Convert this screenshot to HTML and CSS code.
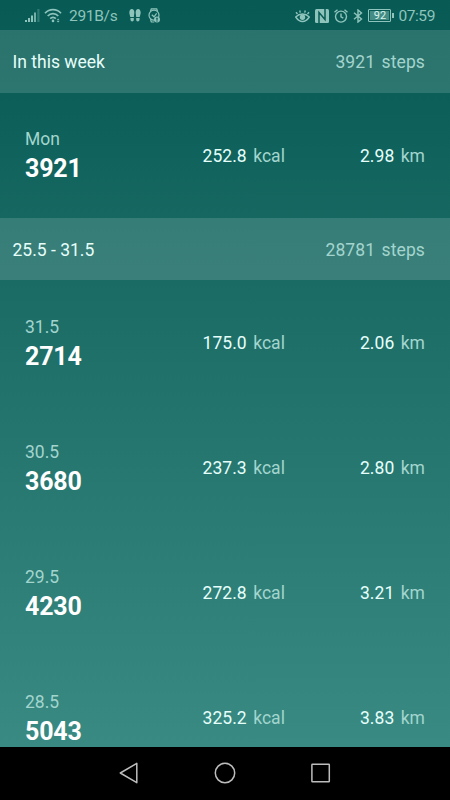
FILE: index.html
```html
<!DOCTYPE html>
<html lang="en">
<head>
    <meta charset="UTF-8">
    <meta name="viewport" content="width=device-width, initial-scale=1.0">
    <title>Steps history</title>
    <link rel="stylesheet" href="styles.css">
</head>
<body>
    <div class="status-bar">
        <svg class="signal" width="15" height="14" viewBox="0 0 15 14" fill="currentColor">
            <path d="M0 11h2v2H0zM3 9h2v4H3zM6 6.5h2V13H6z"/>
            <path opacity=".8" d="M9 3.5h2V13H9z"/>
            <path opacity=".3" d="M12.3 0h2.2v13h-2.2z"/>
        </svg>
        <svg class="wifi" width="18" height="15" viewBox="0 0 18 15" fill="none" stroke="currentColor" stroke-width="1.7">
            <path d="M1 5.2C5.4.4 12.6.4 17 5.2M3.7 8c2.9-3.1 7.7-3.1 10.6 0M6.2 10.7c1.6-1.7 4-1.7 5.6 0"/>
            <circle cx="9" cy="12.9" r="1.3" fill="currentColor" stroke="none"/>
            <path d="M12.7 12.2l1.4-1.7 1.4 1.7zM12.7 13l1.4 1.6 1.4-1.6z" fill="currentColor" stroke="none"/>
        </svg>
        <span class="speed">291B/s</span>
        <svg class="feet" width="12" height="13" viewBox="0 0 12 13" fill="currentColor">
            <path d="M2.8 0C4.6 0 5.5 1.7 5.3 4L4.8 8H1.3L.5 5C-.1 2.5 1 0 2.8 0zM1.4 9h3.4v1.8c0 2.2-3.2 2.2-3.3 0zM9.2 0C7.4 0 6.5 1.7 6.7 4l.5 4h3.5l.8-3c.6-2.5-.5-5-2.3-5zM10.6 9H7.2v1.8c0 2.2 3.2 2.2 3.3 0z"/>
        </svg>
        <svg class="watch" width="12" height="15" viewBox="0 0 12 15" fill="none" stroke="currentColor" stroke-width="1.2">
            <path d="M2.5 3.3L3.3.8h5.4l.8 2.5M2.5 11.3l.8 2.7h3"/>
            <circle cx="6" cy="7.2" r="5"/>
            <path d="M3.8 6.7L6 8.8l2.6-3.4"/>
            <circle cx="9" cy="11.5" r="3" fill="currentColor" stroke="none"/>
            <path class="cutout" d="M9 9.7v2M9 12.4v1"/>
        </svg>

        <svg class="eye" width="15" height="14" viewBox="0 0 15 14" fill="none" stroke="currentColor" stroke-width="1.4">
            <path d="M.7 8c4-4 9.6-4 13.6 0-4 6-9.6 6-13.6 0zM2.5 5L1 3.3M5.3 3.6L4.7 1.5M9.7 3.6l.6-2.1M12.5 5L14 3.3"/>
            <circle cx="7.5" cy="8.3" r="2.7" fill="currentColor" stroke="none"/>
            <circle class="cutout-fill" cx="8" cy="7.6" r=".7"/>
        </svg>
        <svg class="nfc" width="14" height="14" viewBox="0 0 14 14">
            <path fill="currentColor" d="M1.5 0H12.5Q14 0 14 1.5V12.5Q14 14 12.5 14H1.5Q0 14 0 12.5V1.5Q0 0 1.5 0z"/>
            <path class="cutout" d="M4 14V3.6l6 6.8V0"/>
        </svg>
        <svg class="alarm" width="14" height="14" viewBox="0 0 14 14" fill="none" stroke="currentColor" stroke-width="1.4">
            <circle cx="7" cy="7.6" r="5.5"/>
            <path d="M7 4.6v3.3l2.3 1.3M.5 3.3L3.5.8M13.5 3.3L10.5.8"/>
        </svg>
        <svg class="bluetooth" width="10" height="14" viewBox="0 0 10 14" fill="none" stroke="currentColor" stroke-width="1.4">
            <path d="M1 3.8l7.5 6.2L5 13V1l3.5 3L1 10.2"/>
        </svg>
        <div class="battery"><span>92</span></div>
        <span class="clock">07:59</span>
    </div>

    <div class="history">
        <div class="week-header">
            <span class="week">In this week</span>
            <span class="total">3921 <span class="unit">steps</span></span>
        </div>
        <div class="day">
            <div class="steps"><span class="date">Mon</span><b>3921</b></div>
            <div class="value">252.8 <span class="unit">kcal</span></div>
            <div class="value">2.98 <span class="unit">km</span></div>
        </div>

        <div class="week-header">
            <span class="week">25.5 - 31.5</span>
            <span class="total">28781 <span class="unit">steps</span></span>
        </div>
        <div class="day">
            <div class="steps"><span class="date">31.5</span><b>2714</b></div>
            <div class="value">175.0 <span class="unit">kcal</span></div>
            <div class="value">2.06 <span class="unit">km</span></div>
        </div>
        <div class="day">
            <div class="steps"><span class="date">30.5</span><b>3680</b></div>
            <div class="value">237.3 <span class="unit">kcal</span></div>
            <div class="value">2.80 <span class="unit">km</span></div>
        </div>
        <div class="day">
            <div class="steps"><span class="date">29.5</span><b>4230</b></div>
            <div class="value">272.8 <span class="unit">kcal</span></div>
            <div class="value">3.21 <span class="unit">km</span></div>
        </div>
        <div class="day">
            <div class="steps"><span class="date">28.5</span><b>5043</b></div>
            <div class="value">325.2 <span class="unit">kcal</span></div>
            <div class="value">3.83 <span class="unit">km</span></div>
        </div>
    </div>

    <div class="nav-bar">
        <svg width="22" height="22" viewBox="0 0 22 22"><path d="M18.8 1.3v19.4L2.3 11z"/></svg>
        <svg width="22" height="22" viewBox="0 0 22 22"><circle cx="11" cy="11" r="9.7"/></svg>
        <svg width="22" height="22" viewBox="0 0 22 22"><rect x="1.9" y="2.3" width="17.4" height="17.4" rx=".5"/></svg>
    </div>
</body>
</html>
```
FILE: styles.css
```css
* {
    box-sizing: border-box;
}
body {
    margin: 0;
    height: 800px;
    display: flex;
    flex-direction: column;
    overflow: hidden;
    font-family: Roboto, sans-serif;
    font-size: 17.5px;
    color: #e6fffb;
    background: linear-gradient(#075b54 0, #0b5f58 93px, #1b6b65 280px, #388a82 746px);
}
svg {
    display: block;
    flex: none;
}

/* status bar */
.status-bar {
    height: 30px;
    flex: none;
    display: flex;
    align-items: center;
    padding: 1px 15px 0 25px;
    color: #8fc4bc;
}
.wifi {
    margin-left: 4px;
}
.speed {
    margin-left: 7px;
    width: 49px;
    font-size: 15.5px;
    letter-spacing: -0.3px;
}
.feet {
    margin-left: 11px;
}
.watch {
    margin-left: 7px;
}
.eye {
    margin-left: auto;
}
.nfc {
    margin-left: 5px;
}
.alarm {
    margin-left: 5px;
}
.bluetooth {
    margin-left: 5px;
}
.cutout {
    fill: none;
    stroke: #075b54;
    stroke-width: 1.5;
}
.cutout-fill {
    fill: #075b54;
}
.battery {
    position: relative;
    width: 23px;
    height: 13px;
    margin-left: 5px;
    border: 1px solid #8fc4bc;
    border-radius: 1px;
    background: #458c84;
    box-shadow: inset 0 0 0 1px #075b54;
    color: #d5f5ef;
    font-size: 11px;
    line-height: 11px;
    text-align: center;
}
.battery::after {
    content: "";
    position: absolute;
    top: 3px;
    right: -4px;
    width: 2px;
    height: 5px;
    background: #8fc4bc;
}
.clock {
    margin-left: 7px;
    font-size: 15.5px;
    line-height: 18px;
    letter-spacing: -0.4px;
    text-align: right;
}

/* history list */
.history {
    flex: 1;
    min-height: 0;
    overflow: hidden;
}
.week-header {
    height: 62.5px;
    display: flex;
    justify-content: space-between;
    align-items: center;
    padding: 1.5px 25px 0 12.5px;
    background: rgba(255, 255, 255, 0.14);
}
.total {
    letter-spacing: 0.1px;
}
.total,
.unit,
.date {
    color: #a3d5ce;
}
.unit {
    margin-left: 2px;
}
.day {
    height: 125px;
    display: grid;
    grid-template-columns: 120px 140px 140px;
    align-items: center;
    padding: 1px 25px 0;
}
.steps {
    display: flex;
    flex-direction: column;
    padding-top: 3px;
}
.date {
    line-height: 24px;
}
.steps b {
    font-size: 25px;
    line-height: 36px;
    letter-spacing: -0.2px;
    color: #fff;
}
.value {
    padding-top: 0.8px;
    text-align: right;
    letter-spacing: 0.05px;
}

/* android buttons */
.nav-bar {
    height: 53.5px;
    flex: none;
    display: flex;
    justify-content: center;
    align-items: center;
    gap: 74px;
    background: #000;
}
.nav-bar svg {
    fill: none;
    stroke: #bdbdbd;
    stroke-width: 1.5;
    stroke-linejoin: round;
}
```
